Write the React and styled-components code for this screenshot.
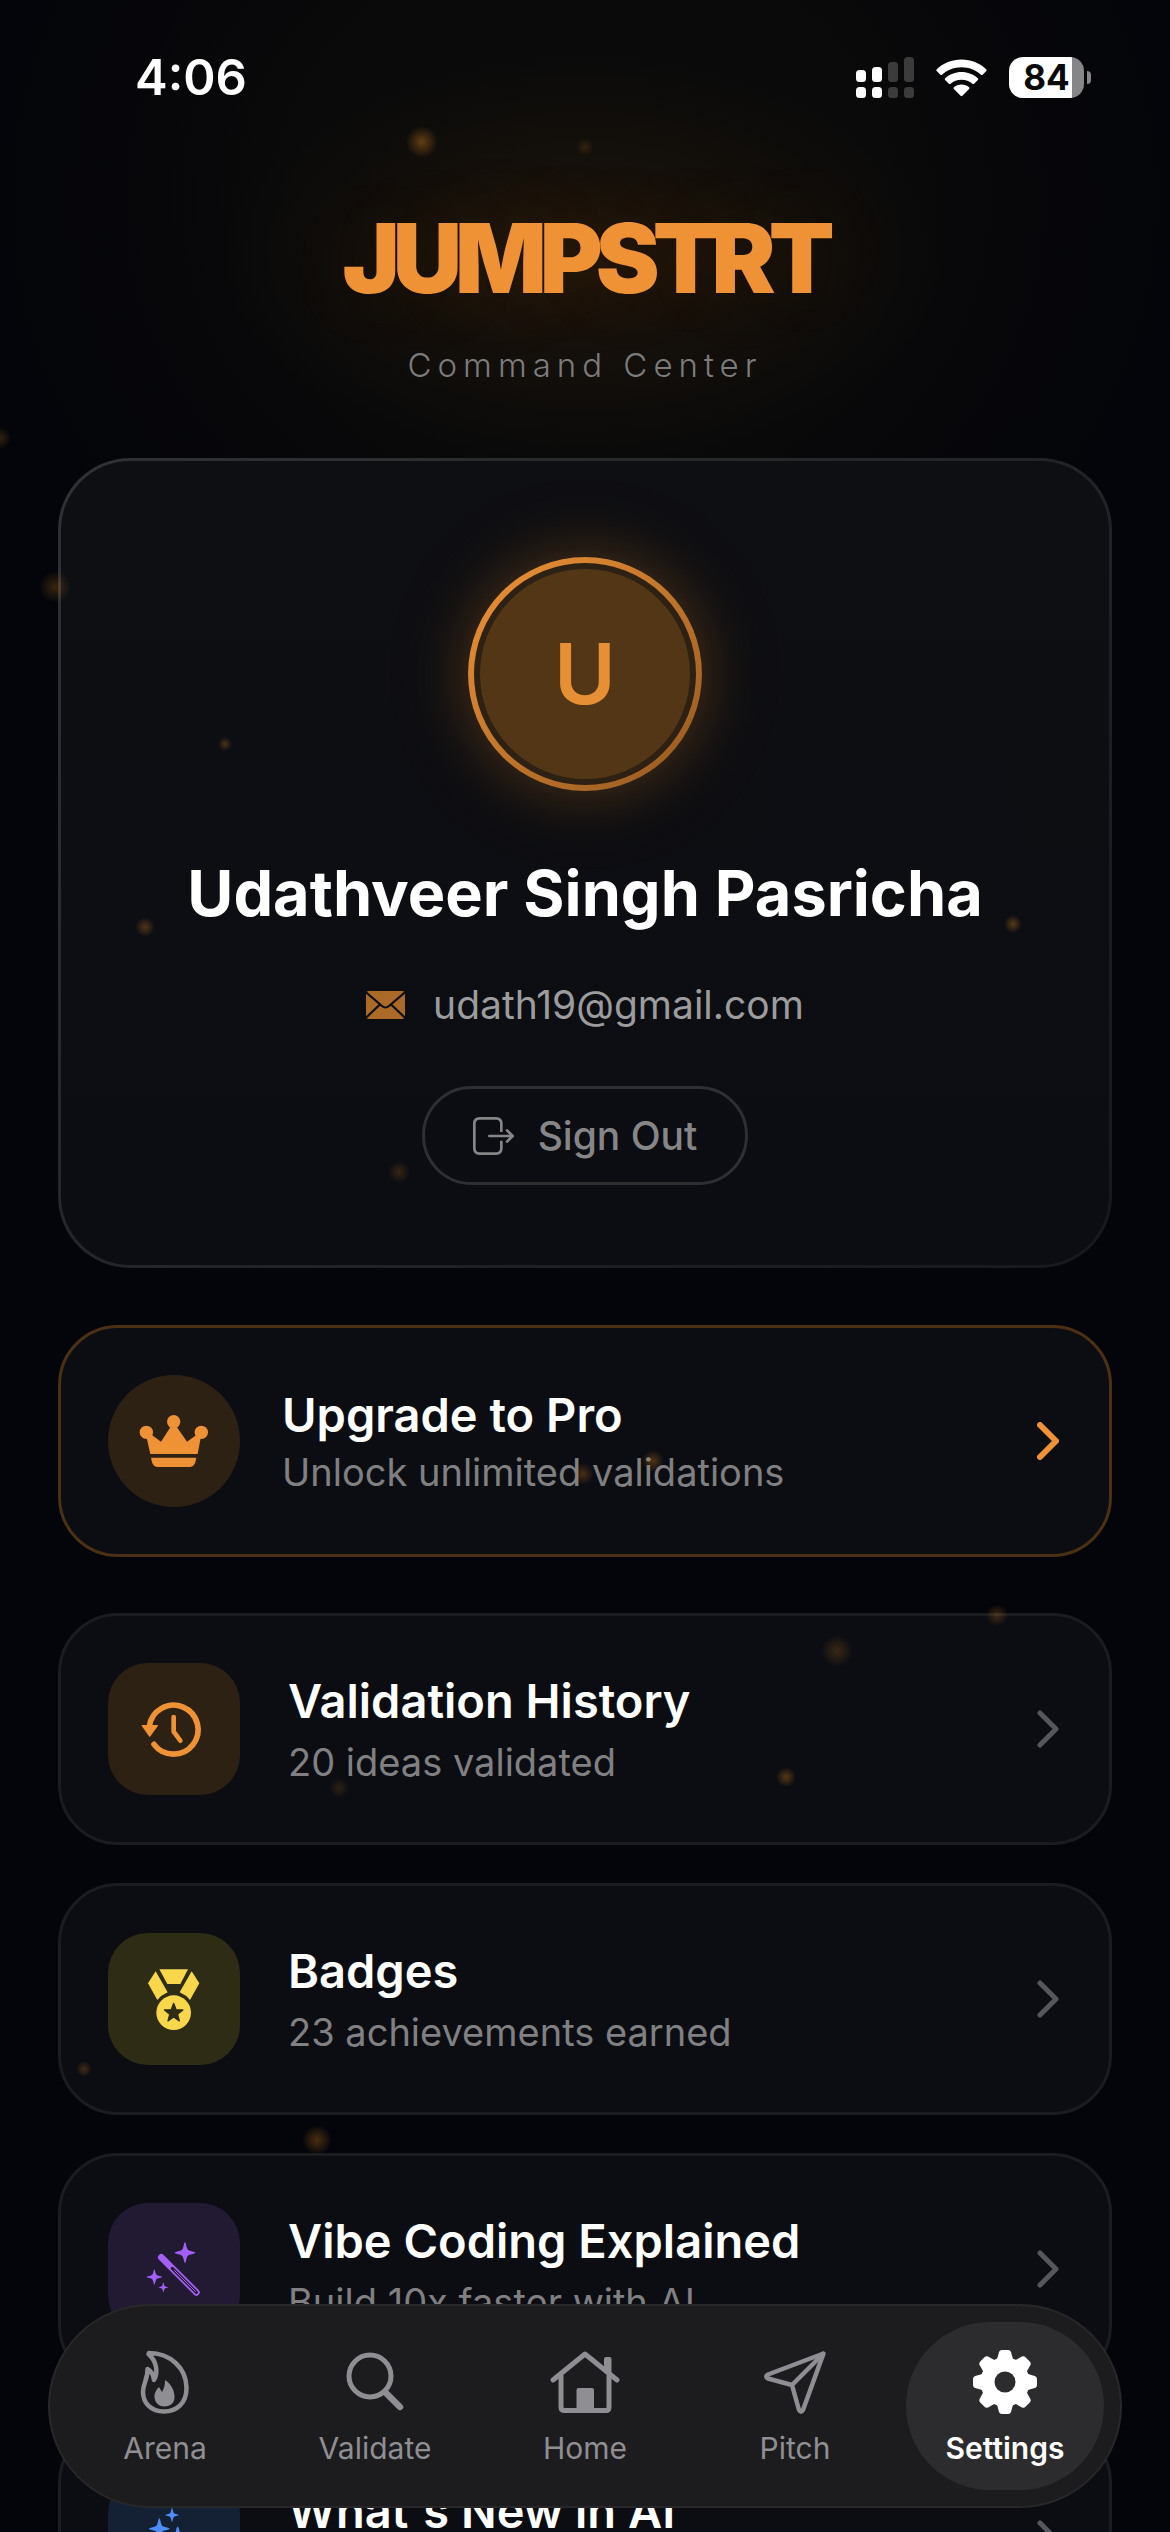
import React, { useState } from 'react'
import styled, { createGlobalStyle, css } from 'styled-components'


const GlobalStyle = createGlobalStyle`
   * {
      box-sizing: border-box;
   }

   body {
      margin: 0;
      background-color: #030409;
      font-family: Inter, "Liberation Sans", sans-serif;
      color: #ffffff;
   }

   button {
      font-family: inherit;
      color: inherit;
      background: none;
      border: none;
      padding: 0;
      margin: 0;
      cursor: pointer;
   }
`;

const Screen = styled.div`
   position: relative;
   height: 100vh;
   overflow: hidden;
   background:
      radial-gradient(ellipse 360px 200px at 50% 258px, rgba(50, 30, 12, 0.5) 0%, rgba(40, 26, 12, 0.35) 45%, transparent 100%),
      radial-gradient(ellipse 620px 540px at 50% 200px, #0b0b0a 0%, #0a0a0a 45%, rgba(7, 7, 9, 0.6) 75%, transparent 100%),
      #04050a;
`;

const Scroll = styled.div`
   height: 100%;
   overflow-y: auto;
   padding: 0 58px 240px;
   scrollbar-width: none;
`;

const StatusBar = styled.div`
   display: flex;
   justify-content: space-between;
   align-items: center;
   height: 98px;
   padding: 57px 21px 0 77px;
`;

const Time = styled.div`
   font-size: 49px;
   line-height: 41px;
   font-weight: 600;
`;

const StatusIcons = styled.div`
   display: flex;
   align-items: center;
   gap: 22px;
`;

const Battery = styled.div`
   display: flex;
   align-items: center;
   gap: 3px;
`;

const BatteryBody = styled.div`
   width: 75px;
   height: 41px;
   border-radius: 14px;
   background: linear-gradient(to right, #ffffff 84%, #868688 84%);
   color: #0a0a0b;
   font-size: 35px;
   line-height: 41px;
   font-weight: 700;
   text-align: center;
`;

const BatteryTip = styled.div`
   width: 4px;
   height: 13px;
   border-radius: 0 6px 6px 0;
   background-color: #868688;
`;

const Header = styled.header`
   margin-top: 110px;
   text-align: center;
`;

const Brand = styled.h1`
   margin: 0;
   font-size: 96px;
   line-height: 100px;
   font-weight: 900;
   letter-spacing: -7px;
   color: #ef9135;
   text-shadow: 0 0 90px rgba(239, 145, 53, 0.1);
`;

const Tagline = styled.p`
   margin: 34px 0 0;
   font-size: 33px;
   line-height: 46px;
   font-weight: 300;
   letter-spacing: 6px;
   color: #7c7c7c;
`;

const Profile = styled.section`
   display: flex;
   flex-direction: column;
   align-items: center;
   margin-top: 70px;
   padding: 96px 48px 80px;
   border: 3px solid transparent;
   border-radius: 72px;
   background:
      linear-gradient(#0e0f13, #0c0d12) padding-box,
      linear-gradient(135deg, #303135, #17181c) border-box;
`;

const Avatar = styled.div`
   display: flex;
   align-items: center;
   justify-content: center;
   width: 234px;
   height: 234px;
   padding: 6px;
   border-radius: 50%;
   background: linear-gradient(135deg, #f09236, #935820);
   box-shadow: 0 0 60px rgba(239, 145, 40, 0.24), 0 0 110px rgba(239, 145, 40, 0.08);
`;

const AvatarInner = styled.div`
   width: 100%;
   height: 100%;
   border: 6px solid #2d2114;
   border-radius: 50%;
   background-color: #523616;
   color: #e68f34;
   font-size: 84px;
   line-height: 210px;
   font-weight: 600;
   text-align: center;
`;

const Name = styled.h2`
   margin: 62px 0 0;
   font-size: 63px;
   line-height: 80px;
   font-weight: 700;
   text-align: center;
`;

const Email = styled.div`
   display: flex;
   align-items: center;
   gap: 28px;
   margin-top: 47px;
   font-size: 39px;
   line-height: 50px;
   color: #9c9c9e;
`;

const SignOut = styled.button`
   display: flex;
   align-items: center;
   gap: 24px;
   height: 99px;
   margin-top: 56px;
   padding: 0 48px;
   border: 3px solid #2e2f33;
   border-radius: 50px;
   font-size: 39px;
   line-height: 50px;
   font-weight: 500;
   color: #868689;
`;

const List = styled.div`
   display: flex;
   flex-direction: column;
   gap: 38px;
   margin-top: 56px;
`;

const Row = styled.button`
   display: flex;
   align-items: center;
   width: 100%;
   padding: 47px 50px 47px 47px;
   border: 3px solid #1b1c20;
   border-radius: 60px;
   background-color: #0c0d12;
   text-align: left;

   ${({ $pro }) => $pro && css`
      margin-top: 57px;
      border-color: #4c3014;
   `}
`;

const Tile = styled.span`
   display: flex;
   flex: none;
   width: 132px;
   height: 132px;
   margin-right: ${({ $round }) => ($round ? '42px' : '48px')};
   border-radius: ${({ $round }) => ($round ? '50%' : '40px')};
   background-color: ${({ $bg }) => $bg};
   color: ${({ $color }) => $color};
`;

const Texts = styled.span`
   display: flex;
   flex: 1;
   flex-direction: column;
   gap: ${({ $tight }) => ($tight ? '2px' : '6px')};
`;

const RowTitle = styled.span`
   font-size: 47px;
   line-height: 60px;
   font-weight: 600;
   color: #ffffff;
`;

const RowSub = styled.span`
   font-size: 38px;
   line-height: 50px;
   color: #808083;
`;

const TabBar = styled.nav`
   position: absolute;
   left: 48px;
   right: 48px;
   bottom: 24px;
   display: flex;
   gap: 12px;
   padding: 16px;
   border: 2px solid #28282a;
   border-radius: 102px;
   background-color: #1c1c1e;
`;

const Tab = styled.button`
   display: flex;
   flex: 1;
   flex-direction: column;
   align-items: center;
   gap: 16px;
   height: 168px;
   padding-top: 28px;
   border-radius: 84px;
   background-color: ${({ $active }) => ($active ? '#2c2c2e' : 'transparent')};
   color: ${({ $active }) => ($active ? '#ffffff' : '#8e8e93')};
   font-size: 30px;
   line-height: 36px;
   font-weight: ${({ $active }) => ($active ? 600 : 400)};
`;

const Ember = styled.i`
   position: absolute;
   left: ${({ $x }) => $x}%;
   top: ${({ $y }) => $y}%;
   width: ${({ $size }) => $size}px;
   height: ${({ $size }) => $size}px;
   border-radius: 50%;
   background: radial-gradient(circle, rgba(220, 135, 30, ${({ $alpha }) => $alpha}) 0%, transparent 70%);
   transform: translate(-50%, -50%);
   pointer-events: none;
`;

const SignalIcon = () => (
   <svg width="58" height="41" viewBox="0 0 58 41" fill="#ffffff">
      <rect x="0" y="13" width="10" height="12" rx="3.5" />
      <rect x="16" y="10" width="10" height="15" rx="3.5" />
      <rect x="0" y="30" width="10" height="11" rx="3.5" />
      <rect x="16" y="30" width="10" height="11" rx="3.5" />
      <g fill="#3b3b3c">
         <rect x="32" y="5" width="10" height="20" rx="3.5" />
         <rect x="48" y="0" width="10" height="25" rx="3.5" />
         <rect x="32" y="30" width="10" height="11" rx="3.5" />
         <rect x="48" y="30" width="10" height="11" rx="3.5" />
      </g>
   </svg>
)

const WifiIcon = () => (
   <svg width="51" height="38" viewBox="0 0 51 38" fill="#ffffff">
      <path d="M25.5 0.5C35 0.5 43.7 4 50.2 10.2C50.8 10.8 50.8 11.5 50.3 12L46.6 15.7C46.1 16.2 45.4 16.2 44.9 15.7C39.7 11 33 8.3 25.5 8.3C18 8.3 11.3 11 6.1 15.7C5.6 16.2 4.9 16.2 4.4 15.7L0.7 12C0.2 11.5 0.2 10.8 0.8 10.2C7.3 4 16 0.5 25.5 0.5Z" />
      <path d="M25.5 13C31.7 13 37.4 15.3 41.8 19.2C42.4 19.7 42.4 20.4 41.9 20.9L38.1 24.7C37.6 25.2 37 25.2 36.4 24.7C33.5 22.2 29.7 20.7 25.5 20.7C21.3 20.7 17.5 22.2 14.6 24.7C14 25.2 13.4 25.2 12.9 24.7L9.1 20.9C8.6 20.4 8.6 19.7 9.2 19.2C13.6 15.3 19.3 13 25.5 13Z" />
      <path d="M25.5 25.4C28.4 25.4 31 26.4 33.1 28.2C33.6 28.7 33.6 29.4 33.1 29.9L26.4 36.7C25.8 37.3 25.2 37.3 24.6 36.7L17.9 29.9C17.4 29.4 17.4 28.7 17.9 28.2C20 26.4 22.6 25.4 25.5 25.4Z" />
   </svg>
)

const MailIcon = () => (
   <svg width="39" height="28" viewBox="0 0 117 84">
      <rect width="117" height="84" rx="9" fill="#ab6a27" />
      <g fill="none" stroke="#0d0e12" strokeWidth="6.5">
         <path d="M0 4L48 45Q58.5 54 69 45L117 4" />
         <path d="M0 80L41 41M117 80L76 41" />
      </g>
   </svg>
)

const SignOutIcon = () => (
   <svg width="41" height="38" viewBox="0 0 123 114" fill="none" stroke="currentColor" strokeWidth="8" strokeLinecap="round" strokeLinejoin="round">
      <path strokeLinecap="butt" d="M85 45V20Q85 4 69 4H20Q4 4 4 20V94Q4 110 20 110H69Q85 110 85 94V71" />
      <path d="M49 57H117M102 40L119 57L102 74" />
   </svg>
)

const ChevronIcon = ({ color, weight }) => (
   <svg width="22" height="38" viewBox="0 0 22 38" fill="none" stroke={color} strokeWidth={weight} strokeLinecap="round" strokeLinejoin="round">
      <path d="M3 3L19 19L3 35" />
   </svg>
)

// the tile drawings all share a 396 grid, three units to a pixel
const TileSvg = ({ children }) => (
   <svg width="132" height="132" viewBox="0 0 396 396" fill="currentColor">{children}</svg>
)

const star = (cx, cy, r) =>
   Array.from({ length: 10 }, (_, i) => {
      const d = i % 2 ? r * 0.42 : r
      const a = (Math.PI / 5) * i
      return `${cx + d * Math.sin(a)},${cy - d * Math.cos(a)}`
   }).join(' ')

const Sparkle = ({ x, y, r }) => (
   <path
      transform={`translate(${x} ${y}) scale(${r / 30})`}
      d="M0 -31C2.5 -31 3 -22 6 -14C8 -9 9 -8 14 -6C22 -3 31 -2.5 31 0C31 2.5 22 3 14 6C9 8 8 9 6 14C3 22 2.5 31 0 31C-2.5 31 -3 22 -6 14C-8 9 -9 8 -14 6C-22 3 -31 2.5 -31 0C-31 -2.5 -22 -3 -14 -6C-9 -8 -8 -9 -6 -14C-3 -22 -2.5 -31 0 -31Z"
   />
)

const CrownIcon = () => (
   <TileSvg>
      <circle cx="115" cy="172" r="20" />
      <circle cx="197" cy="140" r="20" />
      <circle cx="280" cy="172" r="20" />
      <path d="M115 184L127 237H269L279 184L264 181L237 200L206 155H188L159 200L132 180Z" />
      <path d="M129 248H265L262 262Q258 276 244 276H150Q136 276 132 262Z" />
   </TileSvg>
)

const HistoryIcon = () => (
   <TileSvg>
      <g fill="none" stroke="currentColor" strokeLinecap="round" strokeLinejoin="round">
         <path strokeWidth="17" d="M124 190A73.5 73.5 0 1 1 138 244" />
         <path strokeWidth="14" d="M197 162V206L217 233" />
      </g>
      <path stroke="currentColor" strokeWidth="4" strokeLinejoin="round" d="M103 188H148L125 219Z" />
   </TileSvg>
)

const MedalIcon = () => (
   <TileSvg>
      <path d="M154 109H240L217 153H178Z" />
      <path d="M143 115L179 178Q160 186 148 201L120 151Z" />
      <path d="M251 115L215 178Q234 186 246 201L274 151Z" />
      <circle cx="197" cy="239" r="52" />
      <polygon points={star(197, 240, 29)} fill="#2f2c16" stroke="#2f2c16" strokeWidth="4" strokeLinejoin="round" />
   </TileSvg>
)

const WandIcon = () => (
   <TileSvg>
      <Sparkle x={231} y={149} r={30} />
      <Sparkle x={139} y={222} r={22} />
      <Sparkle x={166} y={253} r={14} />
      <g fill="none" strokeLinecap="round">
         <path stroke="currentColor" strokeWidth="20" d="M160 163L265 268" />
         <path stroke="#221a33" strokeWidth="9" d="M193 196L265 268" />
         <path stroke="currentColor" strokeWidth="3" d="M199 202L262 265" />
      </g>
   </TileSvg>
)

const SparklesIcon = () => (
   <TileSvg>
      <Sparkle x={192} y={126} r={20} />
      <Sparkle x={154} y={167} r={30} />
      <Sparkle x={209} y={208} r={46} />
   </TileSvg>
)

const FlameIcon = () => (
   <svg width="50" height="64" viewBox="0 0 50 64">
      <path fill="none" stroke="currentColor" strokeWidth="4.5" strokeLinejoin="round" d="M9 3C30 3 46.5 18 46.5 38C46.5 53 37 61.5 24 61.5C11 61.5 3 53 3 42C3 33 8 29 7.5 19C11 21 13.5 25 14 30C18.5 22 16.5 11 8.5 4Z" />
      <path fill="currentColor" d="M25 30C31 34 34.5 40 34.5 47C34.5 53 30.5 56.5 24.5 56.5C18 56.5 14.5 52 14.5 46.5C14.5 42.5 17 39 19 37L22 42C24 39 25 35 25 30Z" />
   </svg>
)

const SearchIcon = () => (
   <svg width="58" height="64" viewBox="0 0 58 64" fill="none" stroke="currentColor" strokeLinecap="round">
      <circle cx="24" cy="26" r="21" strokeWidth="5" />
      <path strokeWidth="6.5" d="M39 42L54 57" />
   </svg>
)

const HomeIcon = () => (
   <svg width="70" height="64" viewBox="0 0 70 64" fill="none" stroke="currentColor" strokeWidth="5" strokeLinecap="round" strokeLinejoin="round">
      <path d="M3 30L35 4L67 30" />
      <path d="M11 26V57Q11 60.5 14.5 60.5H56Q59 60.5 59 57V26" />
      <path fill="currentColor" stroke="none" d="M26.5 40Q26.5 38 28.5 38H42Q44 38 44 40V61H26.5ZM54 9Q54 7 56 7H59.5Q61.5 7 61.5 9V27L54 20Z" />
   </svg>
)

const PitchIcon = () => (
   <svg width="64" height="64" viewBox="0 0 64 64" fill="none" stroke="currentColor" strokeWidth="4.5" strokeLinecap="round" strokeLinejoin="round">
      <path d="M60.5 3.5L5 24.5Q1.5 26.5 5 28.5L29 35L36 60Q38 63.5 40 60Z" />
      <path d="M60 4L29 35" />
   </svg>
)

const GearIcon = () => (
   <svg width="64" height="64" viewBox="-32 -32 64 64" fill="currentColor">
      <circle r="24.5" />
      {[0, 45, 90, 135, 180, 225, 270, 315].map((deg) => (
         <path key={deg} transform={`rotate(${deg})`} d="M-9.5 -21Q-7.5 -23 -6.5 -28Q-6 -32 -3 -32H3Q6 -32 6.5 -28Q7.5 -23 9.5 -21Z" />
      ))}
      <circle r="10.5" fill="#2c2c2e" />
   </svg>
)

const rows = [
   { title: 'Validation History', sub: '20 ideas validated', bg: '#2d2114', color: '#ef9135', icon: <HistoryIcon /> },
   { title: 'Badges', sub: '23 achievements earned', bg: '#2f2c16', color: '#f9d74a', icon: <MedalIcon /> },
   { title: 'Vibe Coding Explained', sub: 'Build 10x faster with AI', bg: '#221a33', color: '#a35ff5', icon: <WandIcon /> },
   { title: "What's New in AI", sub: 'Latest tools and updates', bg: '#142034', color: '#4d8bf5', icon: <SparklesIcon /> },
]

const tabs = [
   { name: 'Arena', icon: <FlameIcon /> },
   { name: 'Validate', icon: <SearchIcon /> },
   { name: 'Home', icon: <HomeIcon /> },
   { name: 'Pitch', icon: <PitchIcon /> },
   { name: 'Settings', icon: <GearIcon /> },
]

// x and y are percentages of the screen
const embers = [
   { x: 36.1, y: 5.6, size: 32, alpha: 0.4 },
   { x: 50, y: 5.8, size: 18, alpha: 0.16 },
   { x: 0, y: 17.3, size: 22, alpha: 0.22 },
   { x: 4.7, y: 23.2, size: 32, alpha: 0.24 },
   { x: 19.2, y: 29.4, size: 14, alpha: 0.3 },
   { x: 12.4, y: 36.6, size: 20, alpha: 0.32 },
   { x: 86.6, y: 36.5, size: 18, alpha: 0.36 },
   { x: 34.1, y: 46.3, size: 22, alpha: 0.2 },
   { x: 49.8, y: 58.2, size: 22, alpha: 0.28 },
   { x: 55.8, y: 57.7, size: 22, alpha: 0.32 },
   { x: 71.5, y: 65.2, size: 32, alpha: 0.22 },
   { x: 85.2, y: 63.8, size: 22, alpha: 0.25 },
   { x: 67.2, y: 70.2, size: 20, alpha: 0.36 },
   { x: 29, y: 70.6, size: 20, alpha: 0.16 },
   { x: 7.2, y: 81.7, size: 16, alpha: 0.25 },
   { x: 27.1, y: 84.5, size: 30, alpha: 0.32 },
]

const App = () => {

   const [active, setActive] = useState('Settings');

   return (
      <>
         <GlobalStyle />
         <Screen>
            <Scroll>
               <StatusBar>
                  <Time>4:06</Time>
                  <StatusIcons>
                     <SignalIcon />
                     <WifiIcon />
                     <Battery>
                        <BatteryBody>84</BatteryBody>
                        <BatteryTip />
                     </Battery>
                  </StatusIcons>
               </StatusBar>
               <Header>
                  <Brand>JUMPSTRT</Brand>
                  <Tagline>Command Center</Tagline>
               </Header>
               <Profile>
                  <Avatar>
                     <AvatarInner>U</AvatarInner>
                  </Avatar>
                  <Name>Udathveer Singh Pasricha</Name>
                  <Email>
                     <MailIcon />
                     udath19@gmail.com
                  </Email>
                  <SignOut>
                     <SignOutIcon />
                     Sign Out
                  </SignOut>
               </Profile>
               <Row $pro>
                  <Tile $round $bg="#2d2114" $color="#ef9135"><CrownIcon /></Tile>
                  <Texts $tight>
                     <RowTitle>Upgrade to Pro</RowTitle>
                     <RowSub>Unlock unlimited validations</RowSub>
                  </Texts>
                  <ChevronIcon color="#ef9135" weight={6} />
               </Row>
               <List>
                  {rows.map((row) => (
                     <Row key={row.title}>
                        <Tile $bg={row.bg} $color={row.color}>{row.icon}</Tile>
                        <Texts>
                           <RowTitle>{row.title}</RowTitle>
                           <RowSub>{row.sub}</RowSub>
                        </Texts>
                        <ChevronIcon color="#56575b" weight={5} />
                     </Row>
                  ))}
               </List>
            </Scroll>
            {embers.map((e) => (
               <Ember key={`${e.x}-${e.y}`} $x={e.x} $y={e.y} $size={e.size} $alpha={e.alpha} />
            ))}
            <TabBar>
               {tabs.map((tab) => (
                  <Tab key={tab.name} $active={tab.name === active} onClick={() => setActive(tab.name)}>
                     {tab.icon}
                     {tab.name}
                  </Tab>
               ))}
            </TabBar>
         </Screen>
      </>
   )
}

export default App
